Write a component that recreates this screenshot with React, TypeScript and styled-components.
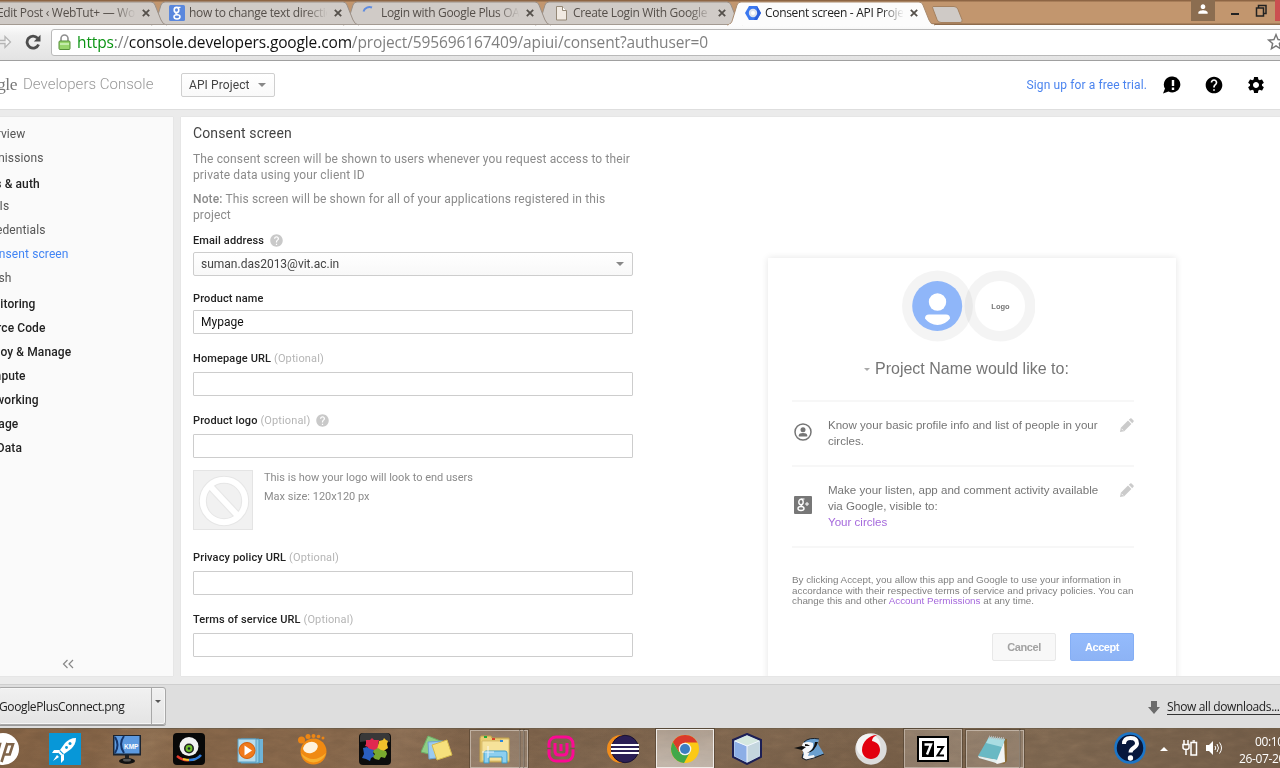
import React from 'react';
import styled, { createGlobalStyle, css } from 'styled-components';
import { MdHelp, MdSettings, MdStarBorder, MdPerson } from 'react-icons/md';

const GlobalStyle = createGlobalStyle`
  * { box-sizing: border-box; }
  html, body { margin: 0; padding: 0; overflow: hidden; }
  body { font-family: Roboto, "Liberation Sans", sans-serif; font-size: 12px; color: #333; }
  svg { display: block; flex: none; }
  p { margin: 0; }
`;

const segoe = css`font-family: "Open Sans", "Noto Sans", sans-serif;`;

const Screen = styled.div`
  width: 1280px;
  height: 768px;
  overflow: hidden;
  display: flex;
  flex-direction: column;
  background: #ebebeb;
`;

/* ---------- browser window ---------- */

const TabStrip = styled.header`
  position: relative;
  z-index: 1;
  height: 25px;
  flex: none;
  display: flex;
  padding-top: 1px;
  background: linear-gradient(#8d6544 0, #8d6544 1px, #c2966e 2px, #c2966e 23px, #8d6b4c 24px);
`;

const Tabs = styled.div`
  display: flex;
  margin-left: -32px;
`;

const TabBox = styled.div<{ $active?: boolean; $order: number }>`
  position: relative;
  z-index: ${p => p.$order};
  width: 192px;
  height: 24px;
  flex: none;
  display: flex;
  align-items: center;
  padding: 0 9px;
  color: ${p => (p.$active ? '#222' : '#554f4a')};
`;

const TabShape = styled.svg`
  position: absolute;
  left: -8px;
  top: 0;
  overflow: visible;
`;

const TabIcon = styled.span`
  position: relative;
  width: 16px;
  height: 16px;
  margin-right: 4px;
  flex: none;
`;

const TabTitle = styled.span`
  ${segoe}
  position: relative;
  width: 138px;
  overflow: hidden;
  white-space: nowrap;
  font-size: 12px;
  line-height: 20px;
  letter-spacing: -0.32px;
  mask-image: linear-gradient(90deg, #000 116px, transparent 139px);
`;

const TabClose = styled.svg`
  position: relative;
  margin-left: 7px;
`;

const NewTab = styled.svg`
  margin: 4px 0 0 1px;
  position: relative;
`;

const WindowControls = styled.div`
  display: flex;
  margin-left: auto;
  height: 21px;
  margin-top: -1px;
  align-items: center;
  color: #222;
`;

const ProfileButton = styled.div`
  width: 24px;
  height: 21px;
  margin-right: 16px;
  display: flex;
  align-items: center;
  justify-content: center;
  background: #8b6d50;
  color: #fff;
  padding-bottom: 3px;
`;

const CloseSliver = styled.div`
  width: 5px;
  height: 21px;
  background: #cb4f50;
`;

const AddressBar = styled.div`
  height: 36px;
  flex: none;
  display: flex;
  align-items: center;
  background: linear-gradient(#fdfdfd, #f0f0f0 30%, #e3e3e3);
  border-bottom: 1px solid #a0a0a0;
  padding-bottom: 1px;
`;

const ReloadIcon = styled.svg`
  margin: 0 10px 0 13px;
`;

const Omnibox = styled.div`
  flex: 1;
  height: 27px;
  margin-right: -8px;
  display: flex;
  align-items: center;
  background: #fff;
  border: 1px solid #b9b9b9;
  border-radius: 3px;
  padding-left: 6px;
`;

const Url = styled.span`
  ${segoe}
  flex: 1;
  margin-left: 6px;
  font-size: 15.5px;
  line-height: 24px;
  white-space: nowrap;
  letter-spacing: -0.13px;
  color: #808080;
  i { font-style: normal; color: #0b9413; }
  b { font-weight: 400; color: #111; }
`;

/* ---------- console header ---------- */

const ConsoleHeader = styled.div`
  height: 49px;
  flex: none;
  display: flex;
  align-items: center;
  background: #fff;
  border-bottom: 1px solid #dedede;
`;

const Wordmark = styled.span`
  width: 17px;
  display: flex;
  justify-content: flex-end;
  overflow: hidden;
  padding-bottom: 2px;
  font-family: "Liberation Serif", serif;
  font-size: 17.5px;
  line-height: 24px;
  letter-spacing: -0.5px;
  color: #777;
`;

const ConsoleTitle = styled.span`
  width: 164px;
  padding: 0 0 2px 6px;
  font-size: 15px;
  font-weight: 300;
  letter-spacing: 0.02px;
  white-space: nowrap;
  color: #999;
`;

const ProjectMenu = styled.div`
  width: 94px;
  height: 24px;
  display: flex;
  align-items: center;
  justify-content: space-between;
  padding: 0 8px 0 7px;
  border: 1px solid #cfcfcf;
  border-radius: 2px;
  background: linear-gradient(#fff, #f9f9f9);
  color: #444;
  letter-spacing: 0.1px;
`;

const Caret = styled.span<{ $w?: number; $color?: string }>`
  border: ${p => p.$w ?? 4}px solid transparent;
  border-top-color: ${p => p.$color ?? '#888'};
  border-bottom: 0;
`;

const HeaderActions = styled.div`
  margin-left: auto;
  display: flex;
  align-items: center;
  gap: 22px;
  padding-right: 14px;
  color: #000;
`;

const TrialLink = styled.a`
  margin-right: -7px;
  color: #4b84ef;
  letter-spacing: 0.11px;
`;

/* ---------- console body ---------- */

const Body = styled.div`
  height: 574px;
  flex: none;
  display: flex;
  gap: 8px;
  padding: 7px 0 8px;
`;

const Sidebar = styled.nav`
  width: 173px;
  flex: none;
  display: flex;
  flex-direction: column;
  padding-top: 5px;
  background: #fafafa;
  box-shadow: 0 0 1px #ccc;
  overflow: hidden;
`;

const NavItem = styled.a<{ $kind: 'page' | 'group' | 'sub'; $selected?: boolean; $first?: boolean; $shift?: number }>`
  height: 24px;
  flex: none;
  line-height: ${p => (p.$first ? 28 : 24)}px;
  margin-top: ${p => p.$shift ?? 0}px;
  margin-left: ${p => (p.$kind === 'sub' ? -16 : -24)}px;
  white-space: nowrap;
  letter-spacing: 0.1px;
  font-weight: ${p => (p.$kind === 'group' ? 500 : 400)};
  color: ${p => (p.$selected ? '#4285f4' : p.$kind === 'group' ? '#222' : '#555')};
`;

const Collapse = styled.svg`
  margin: auto 0 7px 62px;
`;

const Main = styled.main`
  flex: 1;
  display: flex;
  background: #fff;
  box-shadow: 0 0 1px #ccc;
  overflow: hidden;
`;

const Form = styled.section`
  width: 452px;
  flex: none;
  padding: 6px 0 0 12px;
`;

const Title = styled.h1`
  margin: 0 0 8px;
  font-size: 14px;
  font-weight: 400;
  line-height: 20px;
  letter-spacing: 0.13px;
  color: #444;
`;

const Hint = styled.p`
  margin-bottom: 8px;
  line-height: 16px;
  letter-spacing: 0.135px;
  white-space: nowrap;
  color: #8b8b8b;
  b { font-weight: 500; }
`;

const Label = styled.label<{ $top: number; $bottom: number }>`
  display: flex;
  align-items: center;
  height: 16px;
  margin: ${p => p.$top}px 0 ${p => p.$bottom}px;
  font-size: 11px;
  font-weight: 500;
  letter-spacing: 0.13px;
  color: #222;
  white-space: pre;
  span { font-weight: 400; color: #b5b5b5; }
  svg { margin-left: 5px; color: #c9c9c9; }
`;

const Field = styled.div<{ $select?: boolean }>`
  height: 24px;
  display: flex;
  align-items: center;
  justify-content: space-between;
  padding: 0 8px 0 7px;
  border: 1px solid #cdcdcd;
  border-radius: ${p => (p.$select ? 2 : 1)}px;
  background: ${p => (p.$select ? 'linear-gradient(#fff, #f8f8f8)' : '#fff')};
  color: ${p => (p.$select ? '#444' : '#111')};
`;

const LogoPreview = styled.div`
  display: flex;
  gap: 11px;
  margin-top: 12px;
  font-size: 11px;
  line-height: 19px;
  color: #8b8b8b;
  p { margin-top: -2px; white-space: nowrap; }
`;

const LogoBox = styled.div`
  width: 60px;
  height: 60px;
  border: 1px solid #e4e4e4;
  background: #f1f1f1;
`;

/* ---------- consent preview card ---------- */

const Card = styled.section`
  width: 408px;
  height: 460px;
  flex: none;
  display: flex;
  flex-direction: column;
  margin: 141px 0 0 135px;
  padding: 12px 42px 0 24px;
  background: #fff;
  box-shadow: 0 0 7px rgba(0, 0, 0, 0.11);
  font-family: "Liberation Sans", Arial, sans-serif;
  color: #757575;
`;

const Avatars = styled.svg`
  margin-left: 109px;
`;

const CardTitle = styled.h2`
  display: flex;
  align-items: center;
  gap: 5px;
  height: 24px;
  margin: 15px 0 19px 72px;
  font-size: 16px;
  font-weight: 400;
  letter-spacing: 0;
  white-space: nowrap;
`;

const Permission = styled.div<{ $h: number }>`
  height: ${p => p.$h}px;
  display: flex;
  padding-top: 15px;
  border-top: 2px solid #f7f7f7;
  font-size: 11.55px;
  line-height: 16px;
  white-space: nowrap;
  a { color: #a569dc; }
`;

const PermissionIcon = styled.svg<{ $top: number }>`
  margin: ${p => p.$top}px 16px 0 2px;
`;

const PermissionEdit = styled.svg`
  margin: 1px 0 0 auto;
`;

const FinePrint = styled.p`
  padding-top: 27px;
  border-top: 2px solid #f7f7f7;
  font-size: 9.83px;
  line-height: 10.7px;
  white-space: nowrap;
  color: #808080;
  a { color: #a569dc; }
`;

const CardButtons = styled.div`
  display: flex;
  justify-content: flex-end;
  gap: 14px;
  margin-top: 26px;
`;

const CardButton = styled.button<{ $primary?: boolean }>`
  width: 64px;
  height: 28px;
  padding: 0;
  border: 1px solid ${p => (p.$primary ? '#84aef5' : '#e8e8e8')};
  border-radius: 2px;
  background: ${p => (p.$primary ? 'linear-gradient(#94bbfc, #8db3f5)' : '#f8f8f8')};
  color: ${p => (p.$primary ? '#fff' : '#a2a2a2')};
  font: bold 11px "Liberation Sans", Arial, sans-serif;
  letter-spacing: -0.42px;
`;

/* ---------- downloads shelf ---------- */

const Shelf = styled.div`
  ${segoe}
  height: 44px;
  flex: none;
  display: flex;
  align-items: flex-start;
  padding-top: 2px;
  background: #dedede;
  border-top: 1px solid #cfcfcf;
  font-size: 12px;
  color: #222;
`;

const Download = styled.div`
  width: 168px;
  height: 38px;
  margin-left: -2px;
  display: flex;
  border: 1px solid #a8a8a8;
  border-radius: 3px;
  background: linear-gradient(#f1f1f1, #e4e4e4);
  box-shadow: inset 0 0 0 1px #f6f6f6, 0 1px 0 #999;
`;

const DownloadName = styled.span`
  width: 153px;
  padding-left: 0;
  line-height: 37px;
  letter-spacing: -0.38px;
  border-right: 1px solid #a8a8a8;
`;

const DownloadMenu = styled.span`
  padding: 12px 0 0 3px;
`;

const ShowAll = styled.div`
  margin-left: auto;
  display: flex;
  align-items: center;
  gap: 7px;
  height: 40px;
  width: 132px;
  white-space: nowrap;
  span { border-bottom: 1px solid #333; line-height: 14px; letter-spacing: -0.36px; }
`;

/* ---------- taskbar ---------- */

const Taskbar = styled.footer`
  position: relative;
  height: 40px;
  flex: none;
  display: flex;
  background:
    linear-gradient(115deg, transparent 8%, rgba(160, 130, 100, 0.35) 12%, transparent 15%, transparent 27%, rgba(150, 122, 98, 0.35) 31%, transparent 36%),
    linear-gradient(165deg, transparent 40%, rgba(150, 125, 100, 0.2) 55%, transparent 75%),
    linear-gradient(90deg, #7b5c40, #806247 25%, #745c46 45%, #705943 70%, #79634d 82%, #6d5844);
  box-shadow: inset 0 1px 0 #6b5a45;
`;

const Grain = styled.svg`
  position: absolute;
  inset: 0;
  opacity: 0.2;
  mix-blend-mode: overlay;
`;

const Slots = styled.div`
  position: relative;
  display: flex;
  margin-left: -28px;
`;

const Slot = styled.div<{ $state?: 'open' | 'active' }>`
  position: relative;
  width: 58px;
  height: 39px;
  margin: 1px 2px 0;
  flex: none;
  display: flex;
  align-items: center;
  justify-content: center;
  ${p => p.$state === 'open' && css`
    border: 1px solid rgba(220, 210, 200, 0.55);
    background: rgba(255, 255, 255, 0.18);
    outline: 1px solid rgba(50, 40, 30, 0.35);
  `}
  ${p => p.$state === 'active' && css`
    border: 1px solid #f0ece8;
    background: linear-gradient(rgba(255, 255, 255, 0.38), rgba(255, 255, 255, 0.52));
    outline: 1px solid rgba(50, 40, 30, 0.4);
  `}
`;

const Stack = styled.div<{ $w: number }>`
  width: 58px;
  height: 38px;
  display: flex;
  & > div {
    border: 1px solid rgba(220, 210, 200, 0.6);
    background: rgba(255, 255, 255, 0.17);
    outline: 1px solid rgba(50, 40, 30, 0.35);
  }
  & > div:first-child {
    width: ${p => p.$w}px;
    display: flex;
    align-items: center;
    justify-content: center;
  }
  & > div:not(:first-child) {
    flex: 1;
    border-left: 0;
  }
`;

const Tray = styled.div`
  ${segoe}
  position: relative;
  display: flex;
  align-items: center;
  width: 166px;
  margin-left: auto;
  color: #fff;
  font-size: 12px;
`;

const Clock = styled.div`
  width: 46px;
  margin-left: 17px;
  padding-top: 3px;
  line-height: 17px;
  white-space: nowrap;
  letter-spacing: -0.35px;
  overflow: hidden;
  div:first-child { padding-left: 16px; }
`;

/* ---------- tab pieces ---------- */

const GoogleFavicon = () => (
  <svg width="16" height="16" viewBox="0 0 16 16">
    <rect width="16" height="16" rx="1.5" fill="#5a87dd" />
    <g fill="none" stroke="#fff">
      <ellipse cx="7.5" cy="5" rx="2.3" ry="2.6" strokeWidth="1.6" />
      <path d="M8.5 2.3h3M9 7.3C6 8 6.400 9 8.500 9.700" strokeWidth="1.3" />
      <ellipse cx="8" cy="11.800" rx="3" ry="2.100" strokeWidth="1.5" />
    </g>
  </svg>
);

const SpinnerFavicon = () => (
  <svg width="16" height="16" viewBox="0 0 16 16">
    <path d="M2.500 6.500A6.300 6.300 0 0 1 11 2.500" fill="none" stroke="#5f8ce0" strokeWidth="2" />
  </svg>
);

const PageFavicon = () => (
  <svg width="16" height="16" viewBox="0 0 16 16">
    <path d="M3.500 1.500h6l4 4v9.500h-10z" fill="#f1eae2" stroke="#948877" />
    <path d="M9.500 1.500v4h4" fill="#fff" stroke="#948877" />
  </svg>
);

const ConsoleFavicon = () => (
  <svg width="16" height="16" viewBox="0 0 16 16">
    <path d="M4 1h8l4 7-4 7H4L0 8z" fill="#3b78f0" />
    <path d="M12 1l4 7-4 7H9l3-7z" fill="#2c5fdb" />
    <circle cx="8" cy="8" r="4.200" fill="#dfe3ec" />
    <circle cx="8" cy="8" r="2" fill="#fff" />
  </svg>
);

interface TabProps {
  title: string;
  icon?: React.ReactNode;
  active?: boolean;
  order: number;
}

const Tab = ({ title, icon, active, order }: TabProps) => (
  <TabBox $active={active} $order={order}>
    <TabShape width="212" height="24">
      <path
        d="M-1 24C4 23 4 20 5 17L9 4Q10 1 13 1H191Q194 1 195 4L201 19Q203 24 207 24"
        fill={active ? '#fcfcfc' : '#d0cbc7'}
        stroke={active ? '#a98a6d' : '#9a8f86'}
      />
      {active ? <path d="M1 24H206" stroke="#fcfcfc" strokeWidth="1.5" /> : <path d="M0 23.500H207" stroke="#a39a92" />}
    </TabShape>
    <TabIcon>{icon}</TabIcon>
    <TabTitle>{title}</TabTitle>
    <TabClose width="8" height="8" viewBox="0 0 8 8">
      <path d="M.8.8l6.400 6.400M7.200.8L.8 7.200" stroke="#55504b" strokeWidth="1.800" />
    </TabClose>
  </TabBox>
);

/* ---------- card pieces ---------- */

const Pencil = () => (
  <PermissionEdit width="14" height="14" viewBox="0 0 14 14">
    <path d="M0 14l.8-4.200L8 2.600 11.400 6 4.200 13.200zM8.800 1.800L10.200.5q.7-.7 1.400 0l1.900 1.900q.7.700 0 1.400l-1.300 1.400z" fill="#cbcbcb" />
    <path d="M1.600 10.800l1.600 1.600" stroke="#fff" strokeWidth=".8" />
  </PermissionEdit>
);

/* ---------- taskbar icons ---------- */

const HpIcon = () => (
  <svg width="32" height="32" viewBox="0 0 32 32">
    <circle cx="16" cy="16" r="16" fill="#fff" />
    <path d="M11 3L6 22M8 11h5l-3 11M20.500 10l-6 19M19 11.300h7l-3.300 10.200H17" fill="none" stroke="#80654b" strokeWidth="2.600" />
  </svg>
);

const RocketIcon = () => (
  <svg width="32" height="32" viewBox="0 0 32 32">
    <rect width="32" height="32" fill="#0797d8" />
    <path d="M27 5c-5 0-8 2-11 5l-5 7 4 4 7-5c3-3 5-6 5-11z" fill="#fff" />
    <path d="M9.500 18.500l4 4" stroke="#fff" strokeWidth="2" />
    <path d="M11 17l-6 0-2 3 6 0zM15 21l0 6-3 3 0-7zM8 22l-4 6 6-4z" fill="#fff" />
    <circle cx="21" cy="10.500" r="1.500" fill="#0797d8" />
    <circle cx="17.500" cy="14.500" r="1.400" fill="#0797d8" />
  </svg>
);

const KmpIcon = () => (
  <svg width="32" height="32" viewBox="0 0 32 32">
    <ellipse cx="16" cy="28" rx="8" ry="3" fill="#111" />
    <ellipse cx="16" cy="27" rx="4" ry="1.500" fill="#555" />
    <path d="M14 21h4v5h-4z" fill="#222" />
    <rect x="2" y="2" width="28" height="20.500" fill="#1b2430" />
    <rect x="3.500" y="3" width="25" height="17.500" fill="#5d9ae0" />
    <path d="M4 4q5 8 0 16M13 3q-6 8 0 17" fill="none" stroke="#15366b" strokeWidth="2" />
    <text x="13" y="16" fontFamily="Liberation Sans" fontWeight="700" fontSize="6.500" fill="#fff">KMP</text>
  </svg>
);

const WebcamIcon = () => (
  <svg width="32" height="32" viewBox="0 0 32 32">
    <rect width="32" height="32" rx="4" fill="#080808" />
    <path d="M4 23q6 5 12 4" fill="none" stroke="#e53a2c" strokeWidth="2.500" />
    <path d="M10 26q8 2 13 0" fill="none" stroke="#f0c72e" strokeWidth="2" />
    <path d="M16 27q8 0 12-5" fill="none" stroke="#2f7de0" strokeWidth="2.500" />
    <circle cx="16" cy="13.500" r="9.500" fill="#f1f1f1" />
    <circle cx="16" cy="15.500" r="5" fill="#222" />
    <circle cx="16" cy="15.500" r="3.400" fill="#6fc02c" />
    <circle cx="16" cy="15.500" r="1.300" fill="#123" />
  </svg>
);

const MediaIcon = () => (
  <svg width="32" height="32" viewBox="0 0 32 32">
    <path d="M10 6h18v24H10z" fill="#6fb4d8" />
    <path d="M6 6h18v24H6z" fill="#8ccbe6" stroke="#4f97bd" />
    <path d="M3 6h18v23H3z" fill="#b7dcec" stroke="#5aa0c4" />
    <circle cx="12" cy="17.500" r="8" fill="#f07a1c" stroke="#d35f0c" />
    <path d="M9.500 12.500l7.500 5-7.500 5z" fill="#fff" />
  </svg>
);

const GomIcon = () => (
  <svg width="32" height="32" viewBox="0 0 32 32">
    <g fill="#ee8613">
      <circle cx="4.500" cy="7" r="3.500" /><circle cx="11" cy="3.500" r="2.500" />
      <circle cx="16.500" cy="3" r="2" /><circle cx="21.500" cy="3.500" r="1.800" /><circle cx="26" cy="5" r="1.500" />
    </g>
    <circle cx="16.500" cy="18.500" r="13" fill="#f08a12" />
    <path d="M4 20q12 12 25 0a13 13 0 0 1-25 0z" fill="#f8b02e" />
    <ellipse cx="13.500" cy="14.500" rx="7.500" ry="5.500" fill="#fff3dd" transform="rotate(-18 13.500 14.500)" />
  </svg>
);

const PuzzleIcon = () => (
  <svg width="32" height="32" viewBox="0 0 32 32">
    <rect width="32" height="32" rx="4" fill="#0d0d0d" />
    <path d="M1 4q0-4 4-4h22q4 0 4 4v5Q16 6 1 9z" fill="#555" opacity=".6" />
    <path d="M7 7h4l2-2 2 2h5l-1 4 2 2-2 3-2 2-4-1-4 1v-4l-3-1 1-2z" fill="#e02a50" />
    <path d="M20 8l4-1 1-2 2 2 2 1-1 3 1 4-3 2-2 2-3-2-3-1 1-3z" fill="#efc02b" />
    <path d="M4 15l4-1 3 2 4 1-1 3 2 3-4 2-1 3-4-2-4-1 2-4z" fill="#2a5fc0" />
    <path d="M15 17l4-2 3 2 5 1 1 3-2 4-4-1-2 3-4-1-2-2 2-3-2-2z" fill="#79a92e" />
  </svg>
);

const StickyIcon = () => (
  <svg width="32" height="32" viewBox="0 0 32 32">
    <path d="M7 3l15 6-6 14-16-4z" fill="#8fce86" stroke="#6daf66" />
    <path d="M7 9l15-1 1 16-15 2z" fill="#9bcbf0" stroke="#6fa4cf" />
    <path d="M11 12l15-5 5 15-15 5z" fill="#f6e07c" stroke="#d5b94e" />
  </svg>
);

const ExplorerIcon = () => (
  <svg width="32" height="32" viewBox="0 0 32 32">
    <path d="M1 5l1-2h10l1 2h17v24H1z" fill="#e8cb72" stroke="#c0a04c" />
    <path d="M3 8h18l1-2h8v22H3z" fill="#f6e29a" stroke="#cdb060" strokeWidth=".7" />
    <path d="M5 4h3" stroke="#1ea838" strokeWidth="2" />
    <path d="M13 6h3" stroke="#d8432b" strokeWidth="2" />
    <path d="M21 8h3" stroke="#2a86de" strokeWidth="2" />
    <path d="M5 30V20q0-2 2-2h19q2 0 2 2v10h-5v-6H10v6z" fill="#8ccff0" stroke="#3f9cc8" />
    <path d="M9 13v12M3 19h12" stroke="#fff" opacity=".8" />
  </svg>
);

const WampIcon = () => (
  <svg width="28" height="28" viewBox="0 0 28 28">
    <rect x="2" y="2" width="24" height="24" rx="7" fill="none" stroke="#fb0a93" strokeWidth="3" />
    <path d="M8 8v8q0 4 4 4h4q4 0 4-4V8M14 9v7" fill="none" stroke="#fb0a93" strokeWidth="3" />
    <path d="M0 13.500h5M23 13.500h5" stroke="#6f5a44" strokeWidth="1.500" />
  </svg>
);

const EclipseIcon = () => (
  <svg width="32" height="30" viewBox="0 0 32 30">
    <circle cx="14" cy="15" r="14" fill="#f28d1b" />
    <circle cx="18" cy="15" r="13.700" fill="#2b1f55" stroke="#1a1230" />
    <path d="M4 11h28M4 15h28M4 19h28" stroke="#fff" strokeWidth="1.800" />
  </svg>
);

const ChromeIcon = () => (
  <svg width="30" height="30" viewBox="0 0 30 30">
    <circle cx="15" cy="15" r="14" fill="#fbc915" />
    <path d="M2.900 8A14 14 0 0 0 14 29L20 18 15 15 9 18z" fill="#41a84a" />
    <path d="M15 8.500h12.400A14 14 0 0 0 2.900 8L9 18z" fill="#da3a2b" />
    <circle cx="15" cy="15" r="6.300" fill="#f4f4f4" />
    <circle cx="15" cy="15" r="5" fill="#3c7ec2" />
  </svg>
);

const CubeIcon = () => (
  <svg width="32" height="32" viewBox="0 0 32 32">
    <path d="M16 1l14 6v17l-14 7-14-7V7z" fill="#c9dcf2" stroke="#1c1f55" strokeWidth="2" />
    <path d="M3.500 8L16 13v16.500L3.500 23z" fill="#8caee6" />
    <path d="M16 13l12.500-5v15L16 29.500z" fill="#c4d6de" />
    <path d="M16 2.500L28.500 8 16 13 3.500 8z" fill="#d5e8df" />
    <path d="M16 13v16M4 8l12 5 12-5" fill="none" stroke="#f2f7ff" />
  </svg>
);

const BirdIcon = () => (
  <svg width="32" height="28" viewBox="0 0 32 28">
    <path d="M11 7Q16 2 26 4l-1 5 6 10-10 3-8 2-3-2z" fill="#6ba0cf" />
    <path d="M10 8q5-2 10 0 1 5-3 8l-2 5 6-1 1 3-8 2-4-2 1-5-2-3q-1-4 1-7z" fill="#f5f7f9" />
    <path d="M26 4q-10-2-15 3M31 19l-10 4-8 2-4-2 1-4" fill="none" stroke="#16202c" />
    <path d="M1 13l8-2 4 1-4 3zM12 9q3 0 5 2l-5 0z" fill="#111" />
    <path d="M22 7q-1 8-8 11 8-1 11-11z" fill="#111" />
  </svg>
);

const VodafoneIcon = () => (
  <svg width="32" height="32" viewBox="0 0 32 32">
    <circle cx="16" cy="16" r="15.700" fill="#dcdcdc" />
    <circle cx="13.500" cy="13" r="12" fill="#f4f4f4" />
    <path d="M22 2q-5 2-5 6c5 1 8 4 8 9s-4 9-9 9-9-4-9-9C7 9 14 2 22 2z" fill="#e2000f" />
  </svg>
);

const SevenZipIcon = () => (
  <svg width="32" height="26" viewBox="0 0 32 26">
    <rect x="1" y="1" width="30" height="24" fill="#fff" stroke="#000" strokeWidth="2" />
    <rect x="5" y="5" width="12" height="16" fill="#000" />
    <path d="M7.500 8.500h6.500l-4 10" fill="none" stroke="#fff" strokeWidth="2.400" />
    <path d="M20 11h6l-5.500 8.500H27" fill="none" stroke="#000" strokeWidth="2" />
  </svg>
);

const NotepadIcon = () => (
  <svg width="32" height="32" viewBox="0 0 32 32">
    <path d="M12 4l18 2v22l-3 3-8-3z" fill="#8a6a35" />
    <path d="M27 7l1 22-8 2-5-4z" fill="#f2f5f5" />
    <path d="M12 4l16 2-8 21L1 23z" fill="#69b9c4" />
    <path d="M12 4l16 2-3 8L9 10z" fill="#a9dde2" />
    <path d="M1 23l19 4-1 3L2 25z" fill="#e3efef" />
    <path d="M12 4l16 2" stroke="#bbb" strokeWidth="3" strokeDasharray="1 1" />
  </svg>
);

const HelpOrbIcon = () => (
  <svg width="32" height="32" viewBox="0 0 32 32">
    <circle cx="16" cy="16" r="14.500" fill="#08183c" stroke="#1c76c8" strokeWidth="2.500" />
    <path d="M10 12q0-6 6.500-6t6.500 5.500c0 4.500-6.500 4-6.500 9" fill="none" stroke="#fff" strokeWidth="4" />
    <circle cx="16.500" cy="26" r="2.700" fill="#fff" />
  </svg>
);

const navItems: { text: string; kind: 'page' | 'group' | 'sub'; selected?: boolean; first?: boolean; shift?: number }[] = [
  { text: 'Overview', kind: 'page' },
  { text: 'Permissions', kind: 'page' },
  { text: 'APIs & auth', kind: 'group', first: true },
  { text: 'APIs', kind: 'sub' },
  { text: 'Credentials', kind: 'sub' },
  { text: 'Consent screen', kind: 'sub', selected: true },
  { text: 'Push', kind: 'sub' },
  { text: 'Monitoring', kind: 'group', shift: 2 },
  { text: 'Source Code', kind: 'group' },
  { text: 'Deploy & Manage', kind: 'group' },
  { text: 'Compute', kind: 'group' },
  { text: 'Networking', kind: 'group' },
  { text: 'Storage', kind: 'group' },
  { text: 'Big Data', kind: 'group' },
];

export default function App() {
  return (
    <Screen>
      <GlobalStyle />
      <TabStrip>
        <Tabs>
          <Tab order={4} title="Edit Post ‹ WebTut+ — WordPress" />
          <Tab order={3} title="how to change text direction" icon={<GoogleFavicon />} />
          <Tab order={2} title="Login with Google Plus OAuth" icon={<SpinnerFavicon />} />
          <Tab order={1} title="Create Login With Google" icon={<PageFavicon />} />
          <Tab order={5} active title="Consent screen - API Project" icon={<ConsoleFavicon />} />
        </Tabs>
        <NewTab width="36" height="19" viewBox="0 0 36 19">
          <path d="M4 1.500h21q3 0 4 3l4 10q1 3-2 3H12q-3 0-4-3L4 4q-1-2.500 0-2.500z" fill="#cfcac6" stroke="#a5815f" />
        </NewTab>
        <WindowControls>
          <ProfileButton><MdPerson size={14} /></ProfileButton>
          <svg width="44" height="20" viewBox="0 0 44 20">
            <path d="M0 13h8" stroke="#222" strokeWidth="2" />
            <path d="M25.500 7h7v8h-7zM27.500 6.500V4.500h7.500v8h-2" fill="none" stroke="#222" strokeWidth="1.500" />
          </svg>
          <CloseSliver />
        </WindowControls>
      </TabStrip>

      <AddressBar>
        <svg width="12" height="16" viewBox="0 0 12 16">
          <path d="M-3 6.500H5V2.500L10.500 8 5 13.500V9.500h-8z" fill="#f4f4f4" stroke="#b5b5b5" strokeWidth="1.300" />
        </svg>
        <ReloadIcon width="16" height="16" viewBox="0 0 16 16">
          <path d="M12.600 4.200A6 6 0 1 0 13.600 10.500" fill="none" stroke="#4d4d4d" strokeWidth="2.800" />
          <path d="M15.500.8v6.700H8.800z" fill="#4d4d4d" />
        </ReloadIcon>
        <Omnibox>
          <svg width="13" height="16" viewBox="0 0 13 16">
            <path d="M3 8V4.500a3.500 3.500 0 0 1 7 0V8" fill="none" stroke="#8f8f8f" strokeWidth="1.600" />
            <rect x="1" y="7" width="11" height="8.500" rx="1" fill="#98d56c" stroke="#558f38" />
            <path d="M2 10h9" stroke="#c3ecaa" strokeWidth="2" />
          </svg>
          <Url><i>https</i>://<b>console.developers.google.com</b>/project/595696167409/apiui/consent?authuser=0</Url>
          <MdStarBorder size={22} color="#777" />
        </Omnibox>
      </AddressBar>

      <ConsoleHeader>
        <Wordmark>Google</Wordmark>
        <ConsoleTitle>Developers Console</ConsoleTitle>
        <ProjectMenu>API Project<Caret /></ProjectMenu>
        <HeaderActions>
          <TrialLink>Sign up for a free trial.</TrialLink>
          <svg width="20" height="20" viewBox="0 0 20 20">
            <path d="M11 1.500a8 8 0 1 1-4.500 15L1 18.500l2-5A8 8 0 0 1 11 1.500z" fill="#000" />
            <path d="M9.800 5h2.400v6H9.800zM9.800 12.500h2.400V15H9.800z" fill="#fff" />
          </svg>
          <MdHelp size={20} />
          <MdSettings size={20} />
        </HeaderActions>
      </ConsoleHeader>

      <Body>
        <Sidebar>
          {navItems.map(n => (
            <NavItem key={n.text} $kind={n.kind} $selected={n.selected} $first={n.first} $shift={n.shift}>{n.text}</NavItem>
          ))}
          <Collapse width="12" height="10" viewBox="0 0 12 10">
            <path d="M5.500 1l-4 4 4 4M11 1L7 5l4 4" fill="none" stroke="#888" strokeWidth="1.200" />
          </Collapse>
        </Sidebar>

        <Main>
          <Form>
            <Title>Consent screen</Title>
            <Hint>The consent screen will be shown to users whenever you request access to their<br />private data using your client ID</Hint>
            <Hint><b>Note:</b> This screen will be shown for all of your applications registered in this<br />project</Hint>
            <Label $top={9} $bottom={4}>Email address<MdHelp size={15} /></Label>
            <Field $select>suman.das2013@vit.ac.in<Caret /></Field>
            <Label $top={14} $bottom={4}>Product name</Label>
            <Field>Mypage</Field>
            <Label $top={16} $bottom={6}>Homepage URL <span>(Optional)</span></Label>
            <Field />
            <Label $top={16} $bottom={6}>Product logo <span>(Optional)</span><MdHelp size={15} /></Label>
            <Field />
            <LogoPreview>
              <LogoBox>
                <svg width="58" height="58" viewBox="0 0 58 58" fill="none">
                  <g stroke="#e6e6e6" strokeWidth="8"><circle cx="30" cy="30" r="21.200" /><path d="M16 15l28 30" /></g>
                  <g stroke="#fff" strokeWidth="6"><circle cx="30" cy="30" r="21.200" /><path d="M16 15l28 30" /></g>
                </svg>
              </LogoBox>
              <p>This is how your logo will look to end users<br />Max size: 120x120 px</p>
            </LogoPreview>
            <Label $top={19} $bottom={6}>Privacy policy URL <span>(Optional)</span></Label>
            <Field />
            <Label $top={16} $bottom={6}>Terms of service URL <span>(Optional)</span></Label>
            <Field />
            <Label $top={17} $bottom={6}>Google+ page <span>(Optional)</span><MdHelp size={15} /></Label>
          </Form>

          <Card>
            <Avatars width="134" height="72" viewBox="0 0 134 72">
              <circle cx="36.500" cy="36" r="35.500" fill="#000" fillOpacity=".043" />
              <circle cx="99" cy="36" r="30.250" fill="none" stroke="#000" strokeOpacity=".043" strokeWidth="10.500" />
              <circle cx="36.200" cy="36" r="25" fill="#8fb6f9" />
              <circle cx="36.500" cy="32" r="8.700" fill="#fff" />
              <path d="M28 44.500h17q4 0 4 4-5 6.500-12.500 6.500T24 48.500q0-4 4-4z" fill="#fff" />
              <text x="99.500" y="38.500" textAnchor="middle" fontFamily="Liberation Sans" fontWeight="700" fontSize="7.500" fill="#777">Logo</text>
            </Avatars>
            <CardTitle><Caret $w={3.5} $color="#aaa" />Project Name would like to:</CardTitle>
            <Permission $h={65}>
              <PermissionIcon $top={6} width="18" height="18" viewBox="0 0 18 18">
                <circle cx="9" cy="9" r="8" fill="none" stroke="#757575" strokeWidth="1.500" />
                <circle cx="9" cy="6.700" r="2.500" fill="#757575" />
                <path d="M4.800 13.500v-1.300Q5 10 9 10t4.200 2.200v1.300z" fill="#757575" />
              </PermissionIcon>
              <span>Know your basic profile info and list of people in your<br />circles.</span>
              <Pencil />
            </Permission>
            <Permission $h={81}>
              <PermissionIcon $top={14} width="18" height="18" viewBox="0 0 18 18">
                <rect width="18" height="18" rx="1" fill="#777" />
                <g fill="none" stroke="#fff">
                  <ellipse cx="7" cy="6" rx="2.200" ry="2.700" strokeWidth="1.400" />
                  <path d="M7 3h3.500M8 8.500q-2 1 .5 2" strokeWidth="1.200" />
                  <ellipse cx="7" cy="12.500" rx="3" ry="2" strokeWidth="1.400" />
                  <path d="M13 6v4M11 8h4" />
                </g>
              </PermissionIcon>
              <span>Make your listen, app and comment activity available<br />via Google, visible to:<br /><a>Your circles</a></span>
              <Pencil />
            </Permission>
            <FinePrint>
              By clicking Accept, you allow this app and Google to use your information in<br />
              accordance with their respective terms of service and privacy policies. You can<br />
              change this and other <a>Account Permissions</a> at any time.
            </FinePrint>
            <CardButtons>
              <CardButton>Cancel</CardButton>
              <CardButton $primary>Accept</CardButton>
            </CardButtons>
          </Card>
        </Main>
      </Body>

      <Shelf>
        <Download>
          <DownloadName>GooglePlusConnect.png</DownloadName>
          <DownloadMenu><Caret as="div" $w={3} $color="#555" /></DownloadMenu>
        </Download>
        <ShowAll>
          <svg width="12" height="13" viewBox="0 0 12 13"><path d="M3 0h6v6h3l-6 7-6-7h3z" fill="#6b6b6b" /></svg>
          <span>Show all downloads...</span>
        </ShowAll>
      </Shelf>

      <Taskbar>
        <Grain width="1280" height="40">
          <filter id="grain"><feTurbulence type="fractalNoise" baseFrequency="0.06 0.15" numOctaves="4" /><feColorMatrix type="saturate" values="0" /></filter>
          <rect width="1280" height="40" filter="url(#grain)" />
        </Grain>
        <Slots>
          <Slot><HpIcon /></Slot>
          <Slot><RocketIcon /></Slot>
          <Slot><KmpIcon /></Slot>
          <Slot><WebcamIcon /></Slot>
          <Slot><MediaIcon /></Slot>
          <Slot><GomIcon /></Slot>
          <Slot><PuzzleIcon /></Slot>
          <Slot><StickyIcon /></Slot>
          <Slot><Stack $w={50}><div><ExplorerIcon /></div><div /><div /></Stack></Slot>
          <Slot><WampIcon /></Slot>
          <Slot><EclipseIcon /></Slot>
          <Slot $state="active"><ChromeIcon /></Slot>
          <Slot><CubeIcon /></Slot>
          <Slot><BirdIcon /></Slot>
          <Slot><VodafoneIcon /></Slot>
          <Slot $state="open"><SevenZipIcon /></Slot>
          <Slot><Stack $w={54}><div><NotepadIcon /></div><div /></Stack></Slot>
        </Slots>
        <Tray>
          <HelpOrbIcon />
          <svg width="60" height="20" viewBox="0 0 60 20">
            <path d="M14 13l4-4 4 4z" fill="#fff" />
            <g fill="none" stroke="#fff" strokeWidth="1.500">
              <path d="M38 2v4M42 2v4" />
              <path d="M37 6.500h6v3q0 2-3 2t-3-2zM40 11v6" />
              <rect x="45" y="4.500" width="5.500" height="12.500" />
              <path d="M46.500 3h2.500" />
            </g>
          </svg>
          <svg width="16" height="16" viewBox="0 0 16 16">
            <path d="M0 5h3l4-4v14l-4-4H0z" fill="#fff" />
            <path d="M9 6q1.500 2 0 4M11 4q3 4 0 8M13.500 2.500q4 5.500 0 11" fill="none" stroke="#fff" />
          </svg>
          <Clock><div>00:10</div><div>26-07-2015</div></Clock>
        </Tray>
      </Taskbar>
    </Screen>
  );
}
